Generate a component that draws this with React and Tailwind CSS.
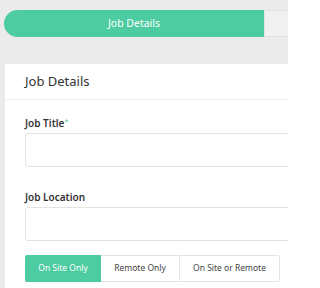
export default function App() {
  const font = { fontFamily: '"Noto Sans", "Liberation Sans", sans-serif' };
  return (
    <div className="w-[288px] h-[288px] overflow-hidden bg-[#ebebeb]" style={font}>
      <div className="flex ml-[4px] pt-[10px] h-[37px]">
        <div className="w-[260px] bg-[#4ccca0] rounded-l-full flex items-center justify-center text-white text-[10.5px]">
          Job Details
        </div>
        <div className="flex-1 bg-[#f1f1f1] border-y border-l border-[#e2e2e2]" />
      </div>

      <div className="ml-[5px] mt-[27px] bg-white overflow-hidden h-[240px]">
        <div className="h-[36px] pl-5 flex items-center border-b border-[#f0f0f0] text-[13px] text-[#333]">
          Job Details
        </div>
        <div className="pl-5 pt-[16px]">
          <div className="text-[10px] font-semibold text-[#333] leading-[14px]">
            Job Title<sup className="text-[#4ccca0] font-normal text-[7px]">*</sup>
          </div>
          <div className="mt-[3px] h-[34px] w-[300px] border border-[#e3e3e3] rounded-[3px]" />

          <div className="mt-[23px] text-[10px] font-semibold text-[#333] leading-[14px]">
            Job Location
          </div>
          <div className="mt-[3px] h-[34px] w-[300px] border border-[#e3e3e3] rounded-[3px]" />

          <div className="mt-[14px] flex h-[27px] text-[8.5px]">
            <div className="w-[76px] bg-[#4ccca0] text-white flex items-center justify-center rounded-l-[2px]">
              On Site Only
            </div>
            <div className="w-[78px] border-y border-[#e3e3e3] text-[#444] flex items-center justify-center">
              Remote Only
            </div>
            <div className="w-[101px] border border-[#e3e3e3] text-[#444] flex items-center justify-center rounded-r-[2px]">
              On Site or Remote
            </div>
          </div>
        </div>
      </div>
    </div>
  );
}
